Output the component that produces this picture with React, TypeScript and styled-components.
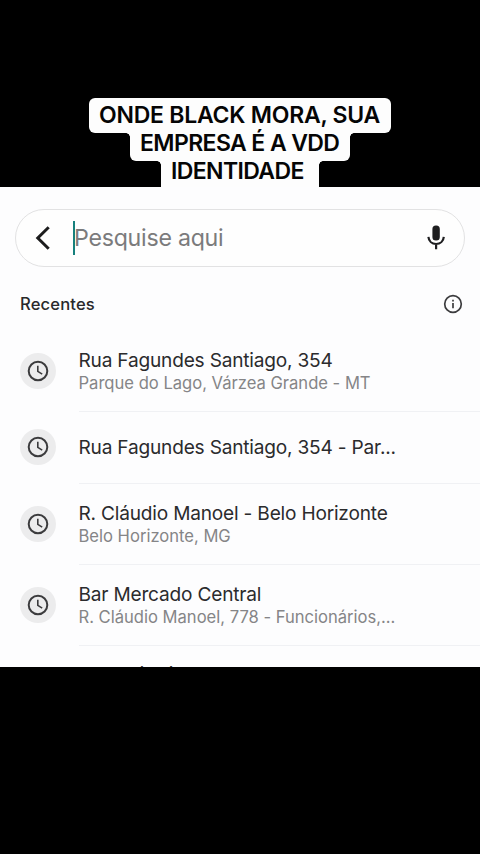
import React from "react";
import styled, { createGlobalStyle } from "styled-components";

const Global = createGlobalStyle`
  * { box-sizing: border-box; }
  html, body { margin: 0; background: #000; }
  body { font-family: Inter, "Liberation Sans", sans-serif; overflow: hidden; }
`;

const Screen = styled.main`
  width: 480px;
  height: 854px;
  display: flex;
  flex-direction: column;
  background: #000;
`;

const Caption = styled.header`
  height: 187px;
  padding-top: 98px;
  display: flex;
  flex-direction: column;
  align-items: center;
  flex: none;
`;

const CaptionLine = styled.div<{ $w: number; $h: number; $ls: number; $first?: boolean; $last?: boolean }>`
  position: relative;
  width: ${p => p.$w}px;
  height: ${p => p.$h}px;
  padding-left: 10px;
  line-height: ${p => (p.$first ? 34 : 20)}px;
  background: #fdfdfd;
  border-radius: ${p => (p.$first ? "6px" : p.$last ? "0" : "0 0 6px 6px")};
  color: #050505;
  font-size: 23px;
  font-weight: 600;
  letter-spacing: ${p => p.$ls}px;
  white-space: nowrap;
  &::before, &::after {
    content: "";
    display: ${p => (p.$first ? "none" : "block")};
    position: absolute;
    top: 0;
    width: 4px;
    height: 4px;
  }
  &::before { left: -4px; background: radial-gradient(circle at 0 100%, transparent 3.5px, #fdfdfd 4px); }
  &::after { right: -4px; background: radial-gradient(circle at 100% 100%, transparent 3.5px, #fdfdfd 4px); }
`;

const Panel = styled.section`
  height: 480px;
  padding-top: 22px;
  background: #fdfdfe;
  overflow: hidden;
  flex: none;
`;

const SearchBar = styled.div`
  height: 58px;
  margin: 0 15px;
  padding: 0 17px 0 19px;
  display: flex;
  align-items: center;
  border: 1px solid #e2e2e3;
  border-radius: 29px;
  background: #fefefe;
`;

const Caret = styled.span`
  width: 2px;
  height: 34px;
  margin-left: 22px;
  background: #16807d;
`;

const Placeholder = styled.span`
  flex: 1;
  margin-left: -1px;
  color: #7b7b7c;
  font-size: 23.2px;
  line-height: 34px;
  letter-spacing: -0.26px;
`;

const SectionHeader = styled.div`
  height: 63px;
  padding: 11px 17px 0 20px;
  display: flex;
  align-items: center;
  justify-content: space-between;
`;

const Heading = styled.h2`
  margin: 0;
  color: #29292b;
  font-size: 16.6px;
  line-height: 20px;
  font-weight: 500;
  letter-spacing: 0.15px;
`;

const Row = styled.div<{ $h: number }>`
  height: ${p => p.$h}px;
  padding-left: 20px;
  display: flex;
`;

const Badge = styled.span<{ $lift?: number }>`
  width: 36px;
  height: 36px;
  margin-right: 22.5px;
  margin-bottom: ${p => p.$lift || 0}px;
  align-self: center;
  display: grid;
  place-items: center;
  border-radius: 50%;
  background: #ececed;
  flex: none;
`;

const Texts = styled.div<{ $top: number }>`
  flex: 1;
  padding-top: ${p => p.$top}px;
  border-bottom: 1px solid #f0f1f4;
  white-space: nowrap;
`;

const Title = styled.div`
  color: #2b2b2d;
  font-size: 19.1px;
  line-height: 24px;
  letter-spacing: -0.2px;
`;

const Subtitle = styled.div`
  color: #858587;
  font-size: 16.6px;
  line-height: 22px;
  letter-spacing: -0.01px;
`;

const Clock = () => (
  <svg width="22" height="22" viewBox="0 0 22 22" fill="none" stroke="#3b3b3d">
    <circle cx="11" cy="11" r="9.3" strokeWidth="2" />
    <path d="M10.8 5.8v5.6l4.4 2.7" strokeWidth="1.6" />
  </svg>
);

const Back = () => (
  <svg width="16" height="24" viewBox="0 0 16 24" fill="none" stroke="#1c1c1d" strokeWidth="3">
    <path d="M13.7 1.2 2.8 12l10.9 10.8" />
  </svg>
);

const Mic = () => (
  <svg width="22" height="26" viewBox="0 0 22 26" fill="none" stroke="#1e1e20">
    <rect x="7.4" y="0.6" width="7.4" height="15" rx="3.5" fill="#1e1e20" stroke="none" />
    <path d="M3.4 11.8c.4 4.4 3.5 7.2 7.7 7.2s7.3-2.8 7.7-7.2M11.1 19v5.2" strokeWidth="2.2" />
  </svg>
);

const Info = () => (
  <svg width="20" height="20" viewBox="0 0 20 20" fill="none" stroke="#3c3c3e">
    <circle cx="10" cy="10" r="8.3" strokeWidth="1.7" />
    <path d="M10 9v5.2M10 5.7v1.8" strokeWidth="1.7" />
  </svg>
);

const recents = [
  { title: "Rua Fagundes Santiago, 354", sub: "Parque do Lago, Várzea Grande - MT", h: 82, top: 18, lift: 0 },
  { title: "Rua Fagundes Santiago, 354 - Par...", sub: "", h: 72, top: 23, lift: 2 },
  { title: "R. Cláudio Manoel - Belo Horizonte", sub: "Belo Horizonte, MG", h: 81, top: 17, lift: 2 },
  { title: "Bar Mercado Central", sub: "R. Cláudio Manoel, 778 - Funcionários,...", h: 81, top: 17, lift: 2 },
];

export default function App() {
  return (
    <>
      <Global />
      <Screen>
        <Caption>
          <CaptionLine $w={302} $h={35} $ls={-0.24} $first>ONDE BLACK MORA, SUA</CaptionLine>
          <CaptionLine $w={220} $h={28} $ls={-0.6}>EMPRESA É A VDD</CaptionLine>
          <CaptionLine $w={158} $h={26} $ls={-0.62} $last>IDENTIDADE</CaptionLine>
        </Caption>
        <Panel>
          <SearchBar>
            <Back />
            <Caret />
            <Placeholder>Pesquise aqui</Placeholder>
            <Mic />
          </SearchBar>
          <SectionHeader>
            <Heading>Recentes</Heading>
            <Info />
          </SectionHeader>
          {recents.map(r => (
            <Row key={r.title} $h={r.h}>
              <Badge $lift={r.lift}><Clock /></Badge>
              <Texts $top={r.top}>
                <Title>{r.title}</Title>
                {r.sub && <Subtitle>{r.sub}</Subtitle>}
              </Texts>
            </Row>
          ))}
          <Row $h={81}>
            <Badge />
            <Texts $top={16}><Title>Rua Cláudio Manoel</Title></Texts>
          </Row>
        </Panel>
      </Screen>
    </>
  );
}
